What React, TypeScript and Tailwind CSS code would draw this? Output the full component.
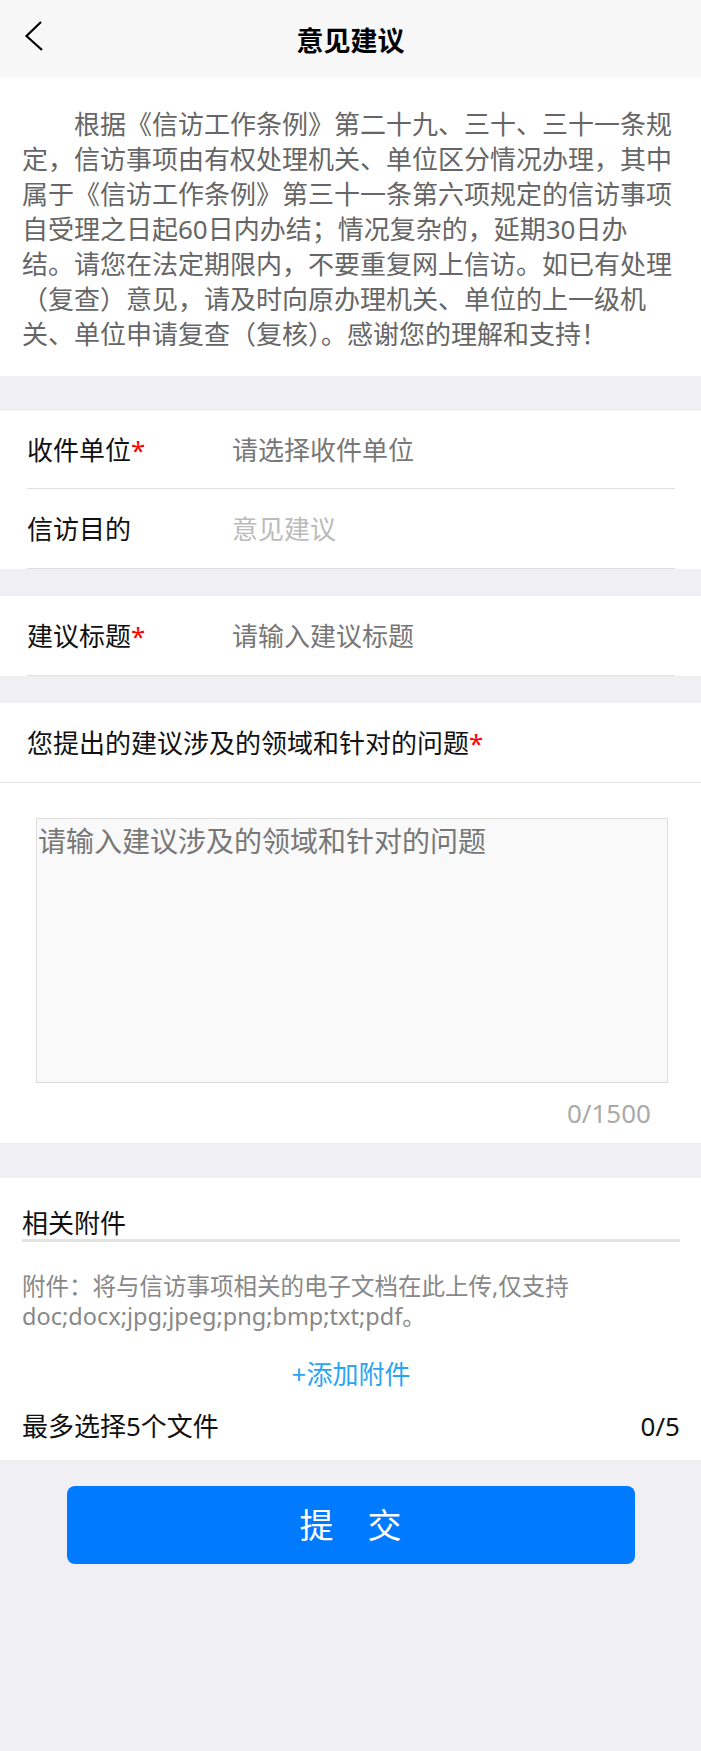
const FONT = "font-['Noto_Sans','Noto_Sans_CJK_SC',sans-serif]";

const NOTICE =
  "根据《信访工作条例》第二十九、三十、三十一条规定，信访事项由有权处理机关、单位区分情况办理，其中属于《信访工作条例》第三十一条第六项规定的信访事项自受理之日起60日内办结；情况复杂的，延期30日办结。请您在法定期限内，不要重复网上信访。如已有处理（复查）意见，请及时向原办理机关、单位的上一级机关、单位申请复查（复核）。感谢您的理解和支持！";

function Field({
  label,
  required,
  value,
  muted,
  tall,
}: {
  label: string;
  required?: boolean;
  value: string;
  muted?: boolean;
  tall?: boolean;
}) {
  return (
    <div
      className={`mx-[27px] mr-[26px] flex items-center border-b border-[#e0e0e0] ${
        tall ? "h-[80px]" : "h-[78px]"
      }`}
    >
      <span className="w-[205px] shrink-0 text-[26px] leading-[34px] text-[#111]">
        {label}
        {required && <span className="text-[#f00]">*</span>}
      </span>
      <span
        className={`text-[26px] leading-[34px] ${muted ? "text-[#bbb]" : "text-[#777]"}`}
      >
        {value}
      </span>
    </div>
  );
}

export default function App() {
  return (
    <div className={`${FONT} min-h-[1751px] w-full bg-[#efeff4]`}>
      {/* header */}
      <header className="grid h-[78px] grid-cols-[80px_1fr_80px] items-center bg-[#f7f7f7]">
        <button className="self-start pl-[24px] pt-[20px]">
          <svg width="20" height="32" viewBox="0 0 20 32" fill="none">
            <path d="M17 2 L2.5 16 L18 30" stroke="#000" strokeWidth="2.2" />
          </svg>
        </button>
        <h1 className="pt-[4px] text-center text-[27px] font-bold leading-[34px] text-black">
          意见建议
        </h1>
        <div />
      </header>

      {/* notice */}
      <section className="bg-white pb-[24px] pl-[22px] pr-[27px] pt-[29px]">
        <p className="indent-[52px] text-[26px] leading-[35px] text-[#666]">{NOTICE}</p>
      </section>

      <div className="h-[35px]" />

      <section className="bg-white">
        <Field label="收件单位" required value="请选择收件单位" />
        <Field label="信访目的" value="意见建议" muted tall />
      </section>

      <div className="h-[27px]" />

      <section className="bg-white">
        <Field label="建议标题" required value="请输入建议标题" tall />
      </section>

      <div className="h-[27px]" />

      <section className="bg-white">
        <div className="flex h-[80px] items-center border-b border-[#e0e0e0] px-[27px]">
          <span className="text-[26px] leading-[34px] text-[#111]">
            您提出的建议涉及的领域和针对的问题<span className="text-[#f00]">*</span>
          </span>
        </div>
        <div className="pb-[15px] pt-[35px]">
          <textarea
            className="ml-[36px] block h-[265px] w-[632px] resize-none border border-[#ddd] bg-[#f9f9f9] px-[1px] pt-[5px] text-[28px] leading-[34px] text-[#333] outline-none placeholder:text-[#777]"
            placeholder="请输入建议涉及的领域和针对的问题"
          />
          <div className="mt-[15px] pr-[50px] text-right text-[26px] leading-[30px] text-[#aaa]">
            0/1500
          </div>
        </div>
      </section>

      <div className="h-[35px]" />

      {/* attachments */}
      <section className="bg-white pb-[16px] pl-[22px] pr-[21px] pt-[30px]">
        <div className="text-[26px] leading-[30px] text-[#111]">相关附件</div>
        <div className="mt-[1px] h-[3px] bg-[#e3e3df]" />
        <p className="mt-[29px] text-[23.5px] leading-[30px] text-[#888]">
          附件：将与信访事项相关的电子文档在此上传,仅支持doc;docx;jpg;jpeg;png;bmp;txt;pdf。
        </p>
        <div className="mt-[25px] text-center text-[26px] leading-[36px] text-[#2ba5f2]">
          +添加附件
        </div>
        <div className="mt-[16px] flex items-center justify-between text-[26px] leading-[36px] text-[#111]">
          <span>最多选择5个文件</span>
          <span>0/5</span>
        </div>
      </section>

      {/* submit */}
      <div className="pt-[26px]">
        <button className="mx-auto flex h-[78px] w-[568px] items-center justify-center rounded-[8px] bg-[#007aff] text-[34px] leading-[40px] text-white">
          提　交
        </button>
      </div>
    </div>
  );
}
